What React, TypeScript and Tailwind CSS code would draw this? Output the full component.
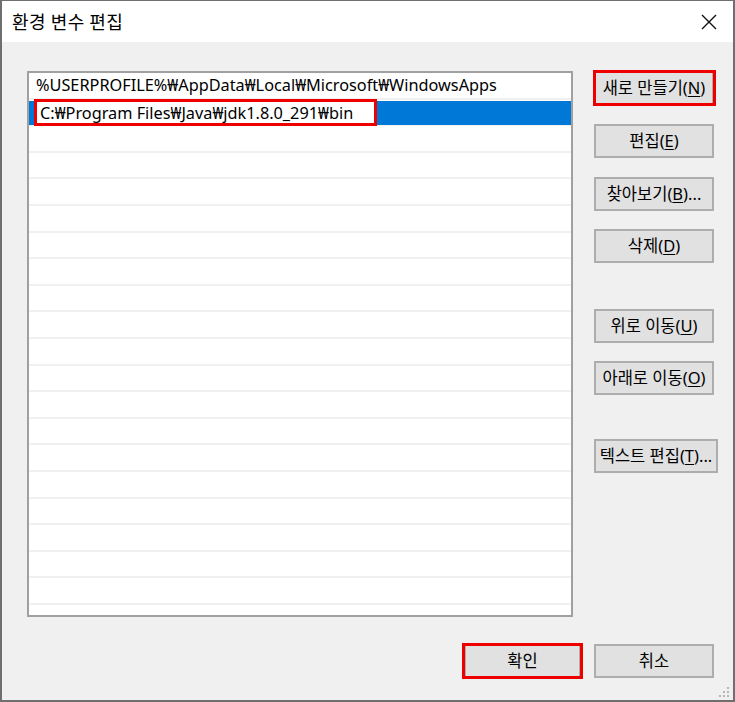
import React from "react";

const font = { fontFamily: '"Noto Sans", "Noto Sans CJK KR", sans-serif' };

function Btn({
  children,
  className = "",
}: {
  children: React.ReactNode;
  className?: string;
}) {
  return (
    <div
      className={
        "h-[34px] flex items-center justify-center border-2 border-[#adadad] bg-[#e1e1e1] text-[16.5px] text-black whitespace-nowrap leading-none " +
        className
      }
    >
      {children}
    </div>
  );
}

function U({ children }: { children: React.ReactNode }) {
  return <span className="underline underline-offset-2">{children}</span>;
}

export default function App() {
  const rows = Array.from({ length: 20 });
  return (
    <div
      className="w-[735px] h-[702px] flex flex-col border-2 border-[#6f6f6f] border-t-[1px] bg-[#f0f0f0] overflow-hidden"
      style={font}
    >
      {/* title bar */}
      <div className="h-[41px] bg-white flex items-center justify-between pl-[10px] pr-[12px] shrink-0">
        <span className="text-[18px] text-black tracking-[0.5px]" style={{ fontFamily: '"Noto Sans CJK KR", sans-serif' }}>
          환경 변수 편집
        </span>
        <svg width="16" height="16" viewBox="0 0 16 16" className="mr-[4px]">
          <path d="M1 1 L15 15 M15 1 L1 15" stroke="#111" strokeWidth="1.4" />
        </svg>
      </div>

      {/* body */}
      <div className="flex-1 relative">
        <div className="flex pl-[25px] pt-[29px]">
          {/* list box */}
          <div className="w-[546px] h-[546px] border-2 border-[#a0a0a0] bg-white relative overflow-hidden">
            {rows.map((_, i) => (
              <div
                key={i}
                className="h-[26.6px] border-b-2 border-[#f0f0f0] flex items-center text-[16.3px] text-black leading-none"
              >
                {i === 0 && <span className="pl-[7px]">%USERPROFILE%₩AppData₩Local₩Microsoft₩WindowsApps</span>}
                {i === 1 && (
                  <div className="w-full h-[24px] self-start mt-[1.4px] bg-[#0078d7] flex items-stretch pl-[8px]">
                    <div className="w-[337px] bg-white flex items-center pl-[3px]">
                      C:₩Program Files₩Java₩jdk1.8.0_291₩bin
                    </div>
                  </div>
                )}
              </div>
            ))}
            {/* red annotation around edited row */}
            <div className="absolute left-[5px] top-[26px] w-[343px] h-[27px] border-[3px] border-[#ee0000]" />
          </div>

          {/* buttons */}
          <div className="ml-[21px] flex flex-col">
            <div className="relative">
              <Btn className="w-[120px]">
                새로 만들기(<U>N</U>)
              </Btn>
              <div className="absolute -left-[1px] -top-[1px] w-[123px] h-[36px] border-[3px] border-[#ee0000]" />
            </div>
            <Btn className="w-[120px] mt-[19px]">
              편집(<U>E</U>)
            </Btn>
            <Btn className="w-[120px] mt-[19px]">
              찾아보기(<U>B</U>)...
            </Btn>
            <Btn className="w-[120px] mt-[18px]">
              삭제(<U>D</U>)
            </Btn>
            <Btn className="w-[120px] mt-[46px]">
              위로 이동(<U>U</U>)
            </Btn>
            <Btn className="w-[120px] mt-[18px]">
              아래로 이동(<U>O</U>)
            </Btn>
            <Btn className="w-[124px] mt-[44px]">
              텍스트 편집(<U>T</U>)...
            </Btn>
          </div>
        </div>

        {/* bottom buttons */}
        <div className="flex justify-end pr-[19px] mt-[27px] gap-[13px]">
          <div className="relative">
            <Btn className="w-[117px]">확인</Btn>
            <div className="absolute -left-[2px] -top-[1px] w-[121px] h-[36px] border-[3px] border-[#ee0000]" />
          </div>
          <Btn className="w-[120px]">취소</Btn>
        </div>

        {/* size grip */}
        <svg className="absolute right-[3px] bottom-[2px]" width="12" height="12" viewBox="0 0 12 12">
          {[
            [9, 1],
            [5, 5],
            [9, 5],
            [1, 9],
            [5, 9],
            [9, 9],
          ].map(([x, y], i) => (
            <rect key={i} x={x} y={y} width="2" height="2" fill="#b8b8b8" />
          ))}
        </svg>
      </div>
    </div>
  );
}
